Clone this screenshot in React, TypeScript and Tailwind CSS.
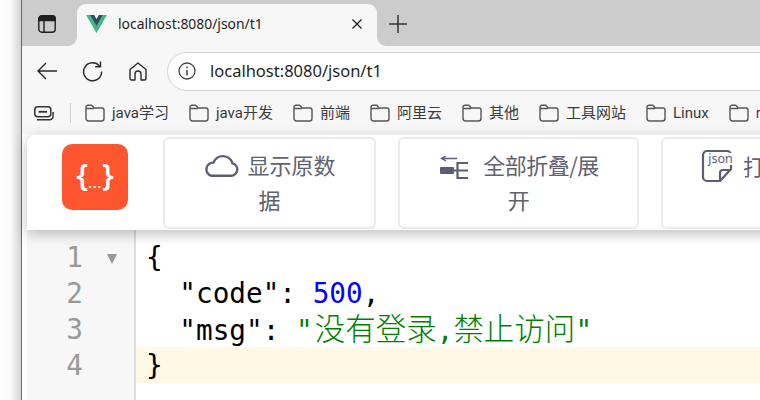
import React from "react";

const ui = "font-['Noto_Sans','Noto_Sans_CJK_SC',sans-serif]";
const cjk = "font-['Noto_Sans_CJK_SC',sans-serif]";

function Folder() {
  return (
    <svg width="20" height="18" viewBox="0 0 20 18" fill="none" stroke="#555" strokeWidth="1.4" className="shrink-0">
      <path d="M1 4.5 V14.5 a2.5 2.5 0 0 0 2.5 2.5 H16.5 a2.5 2.5 0 0 0 2.5 -2.5 V6 a2 2 0 0 0 -2 -2 H9 L7.5 2 a1.5 1.5 0 0 0 -1.2 -0.8 H3 a2 2 0 0 0 -2 2 V4.5 H9" />
    </svg>
  );
}

const bookmarks = ["java学习", "java开发", "前端", "阿里云", "其他", "工具网站", "Linux", "r"];

function Mark({ label, color }: { label: string; color: string }) {
  return (
    <div className="flex items-center gap-[7px] shrink-0">
      <Folder />
      <span className={`text-[15px] leading-[20px] whitespace-nowrap font-['Roboto','Noto_Sans_CJK_SC',sans-serif] ${color}`}>{label}</span>
    </div>
  );
}

function Cloud() {
  return (
    <svg width="36" height="24" viewBox="0 0 36 24" fill="none" stroke="#5b5e70" strokeWidth="2.4" className="inline-block align-[-3px] mr-[8px]">
      <path d="M8.5 22.8 H28 a6.3 6.3 0 0 0 1.5 -12.4 A10 10 0 0 0 10.5 9.6 A6.7 6.7 0 0 0 8.5 22.8 Z" strokeLinejoin="round" />
    </svg>
  );
}

function Collapse() {
  return (
    <svg width="30" height="24" viewBox="0 0 30 24" className="inline-block align-[-6px] mr-[15px]" fill="none" stroke="#5b5e70">
      <path d="M3.5 2.5 H19 M8 0 L3.5 2.5 L8 5" strokeWidth="1.4" />
      <rect x="2" y="11" width="14" height="7" rx="1" fill="#5b5e70" stroke="none" />
      <path d="M15 14.5 H30 M30 7 H19.5 V22 H30" strokeWidth="2.2" />
    </svg>
  );
}

function JsonFile() {
  return (
    <svg width="32" height="34" viewBox="0 0 32 34" fill="none" stroke="#5b5e70" strokeWidth="2.2" className="inline-block align-[-8px] mr-[10px]">
      <path d="M30 20 V6 a4 4 0 0 0 -4 -4 H6 a4 4 0 0 0 -4 4 V28 a4 4 0 0 0 4 4 H19 Z" strokeLinejoin="round" />
      <path d="M19 32 V24 a3 3 0 0 1 3 -3 H30" strokeLinejoin="round" />
      <rect x="8" y="4" width="24" height="12" fill="#fff" stroke="none" />
      <text x="19.5" y="14" textAnchor="middle" fontSize="12.5" fill="#5b5e70" stroke="none" fontFamily="Noto Sans">json</text>
    </svg>
  );
}

function ToolBtn({ w, align, children }: { w: string; align: string; children: React.ReactNode }) {
  return (
    <button className={`${w} ${align} shrink-0 h-[92px] rounded-[6px] border-2 border-[#e9e9ef] bg-white text-[#5f6270] text-[22px] leading-[35px]`}>
      {children}
    </button>
  );
}

export default function App() {
  return (
    <div className={`w-[760px] h-[400px] overflow-hidden flex bg-white ${ui}`}>
      <div className="w-[21px] shrink-0 bg-gradient-to-r from-white via-[#fbfbfb] to-[#d4d4d4]" />
      <div className="w-px shrink-0 bg-[#6a6a6a]" />
      <div className="flex-1 min-w-0 flex flex-col">
        {/* tab strip */}
        <div className="h-[46px] shrink-0 bg-[#cccccc] flex items-end">
          <div className="h-[42px] w-[55px] shrink-0 flex items-center pl-[16px] pb-[2px]">
            <svg width="18" height="18" viewBox="0 0 18 18" fill="none" stroke="#1f1f1f" strokeWidth="1.4">
              <rect x="0.8" y="0.8" width="16.4" height="16.4" rx="3" />
              <path d="M0.8 4 a3 3 0 0 1 3 -3 H14.2 a3 3 0 0 1 3 3 V5.5 H0.8 Z" fill="#1f1f1f" />
              <path d="M6 5.5 V17" />
            </svg>
          </div>
          <div className="relative w-[300px] h-[42px] shrink-0 bg-[#f7f7f7] rounded-t-[9px] flex items-center pl-[9px] pr-[15px] pb-[2px]">
            <svg className="absolute left-[-9px] bottom-0" width="9" height="9" viewBox="0 0 9 9"><path d="M9 0 V9 H0 A9 9 0 0 0 9 0 Z" fill="#f7f7f7" /></svg>
            <svg className="absolute right-[-9px] bottom-0" width="9" height="9" viewBox="0 0 9 9"><path d="M0 0 V9 H9 A9 9 0 0 1 0 0 Z" fill="#f7f7f7" /></svg>
            <svg width="21" height="18" viewBox="0 0 261.76 226.69" className="shrink-0">
              <path d="M161.096.001l-30.225 52.351L100.647.001H-.005l130.876 226.688L261.749.001z" fill="#41b883" />
              <path d="M161.096.001l-30.225 52.351L100.647.001H52.346l78.526 136.01L209.398.001z" fill="#34495e" />
            </svg>
            <span className="ml-[11px] text-[13.9px] text-[#1f1f1f] whitespace-nowrap">localhost:8080/json/t1</span>
            <svg className="ml-auto" width="10" height="10" viewBox="0 0 10 10" stroke="#1f1f1f" strokeWidth="1.3">
              <path d="M0.5 0.5 L9.5 9.5 M9.5 0.5 L0.5 9.5" />
            </svg>
          </div>
          <div className="h-[42px] flex items-center ml-[12px] pb-[2px]">
            <svg width="18" height="18" viewBox="0 0 18 18" stroke="#333" strokeWidth="1.5">
              <path d="M9 0 V18 M0 9 H18" />
            </svg>
          </div>
        </div>

        {/* toolbar */}
        <div className="h-[46px] shrink-0 bg-[#f7f7f7] flex items-center pt-[4px]">
          <svg className="ml-[15px] shrink-0" width="20" height="18" viewBox="0 0 20 18" fill="none" stroke="#2a2a2a" strokeWidth="1.4">
            <path d="M20 9 H1 M9 1 L1 9 L9 17" />
          </svg>
          <svg className="ml-[25px] shrink-0" width="21" height="21" viewBox="0 0 21 21" fill="none" stroke="#2a2a2a" strokeWidth="1.4">
            <path d="M17.5 5 A9 9 0 1 0 19.6 10.5" />
            <path d="M18.5 0.5 V5.8 H13.2" />
          </svg>
          <svg className="ml-[26px] shrink-0" width="18" height="19" viewBox="0 0 18 19" fill="none" stroke="#2a2a2a" strokeWidth="1.4" strokeLinejoin="round">
            <path d="M1 7.5 L9 1 L17 7.5 V16.5 a1.5 1.5 0 0 1 -1.5 1.5 H12 V12 a3 3 0 0 0 -6 0 V18 H2.5 A1.5 1.5 0 0 1 1 16.5 Z" />
          </svg>
          <div className="ml-[20px] flex-1 min-w-0 -mr-[40px] h-[39px] rounded-full border border-[#d2d2d2] bg-white flex items-center pl-[10px]">
            <svg width="18" height="18" viewBox="0 0 18 18" fill="none" stroke="#444" strokeWidth="1.3" className="shrink-0">
              <circle cx="9" cy="9" r="8" />
              <path d="M9 8 V13.5 M9 4.6 V6.2" strokeWidth="1.5" />
            </svg>
            <span className="ml-[14px] text-[16.5px] text-[#1f1f1f] whitespace-nowrap">localhost:8080/json/t1</span>
          </div>
        </div>

        {/* bookmarks */}
        <div className="h-[42px] shrink-0 bg-[#f7f7f7] flex items-center overflow-hidden">
          <svg className="ml-[12px] shrink-0" width="20" height="15" viewBox="0 0 20 15" fill="none" stroke="#333" strokeWidth="1.5">
            <rect x="0.8" y="0.8" width="16" height="10" rx="3" />
            <path d="M4.5 5.8 H13" strokeWidth="1.8" />
            <path d="M3 13.8 H15.5 a3.5 3.5 0 0 0 3.6 -3.5 V6" />
          </svg>
          <div className="ml-[16px] mr-[14px] w-px h-[20px] bg-[#d0d0d0] shrink-0" />
          <div className="flex items-center gap-[20px]">
            {bookmarks.map((b, i) => (
              <Mark key={b} label={b} color={i === 7 ? "text-[#8a1f5a]" : "text-[#3a3a3a]"} />
            ))}
          </div>
        </div>

        {/* page */}
        <div className="flex-1 min-h-0 bg-white pl-[5px] flex flex-col">
          <div className={`relative z-10 h-[96px] shrink-0 rounded-tl-[8px] border-t border-[#eeeeee] bg-white shadow-[0_4px_14px_rgba(0,0,0,0.25)] flex items-center gap-[22px] pl-[35px] -mr-[200px] ${cjk}`}>
            <div className="w-[66px] h-[66px] shrink-0 mr-[13px] mb-[12px] rounded-[10px] bg-[#ff5630] flex items-center justify-center text-white font-['Open_Sans',sans-serif] font-semibold text-[31px] leading-none pb-[4px]">
              <span>{"{"}</span>
              <span className="text-[15px] self-center pt-[15px] tracking-[0.5px]">...</span>
              <span>{"}"}</span>
            </div>
            <ToolBtn w="w-[213px]" align="text-center px-[30px] pb-[2px]"><Cloud />显示原数据</ToolBtn>
            <ToolBtn w="w-[241px]" align="text-center px-[30px] pb-[2px] tracking-[-0.5px]"><Collapse />全部折叠/展开</ToolBtn>
            <ToolBtn w="w-[200px]" align="text-left pl-[38px] pb-[34px]"><JsonFile />打开</ToolBtn>
          </div>

          <div className="flex-1 min-h-0 flex bg-white font-['DejaVu_Sans_Mono','Noto_Sans_CJK_SC',monospace] text-[27.7px] leading-[36px]">
            <div className="w-[107px] shrink-0 bg-[#f7f7f7] pt-[9px] text-[#999999]">
              {[1, 2, 3, 4].map((n) => (
                <div key={n} className="relative w-[56px] text-right h-[36px] pt-[1px]">
                  {n}
                  {n === 1 && (
                    <span className="absolute left-[80px] top-[15px] w-0 h-0 border-x-[5.5px] border-x-transparent border-t-[10px] border-t-[#999999]" />
                  )}
                </div>
              ))}
            </div>
            <div className="w-[2px] shrink-0 bg-[#dddddd]" />
            <div className="flex-1 min-w-0 pt-[9px] text-black whitespace-pre">
              <div className="h-[36px] pl-[10px] pt-[1px]">{"{"}</div>
              <div className="h-[36px] pl-[10px] pt-[1px]">{"  \"code\": "}<span className="text-[#0000ff]">500</span>,</div>
              <div className="h-[36px] pl-[10px] pt-[1px]">{"  \"msg\": "}<span className="text-[#008000]">"<span className="ml-[2px] text-[30.5px] font-light">没有登录</span>,<span className="text-[30.5px] font-light">禁止访问</span>"</span></div>
              <div className="h-[36px] pl-[10px] pt-[1px] bg-[#fff8e5]">{"}"}</div>
            </div>
          </div>
        </div>
      </div>
    </div>
  );
}
